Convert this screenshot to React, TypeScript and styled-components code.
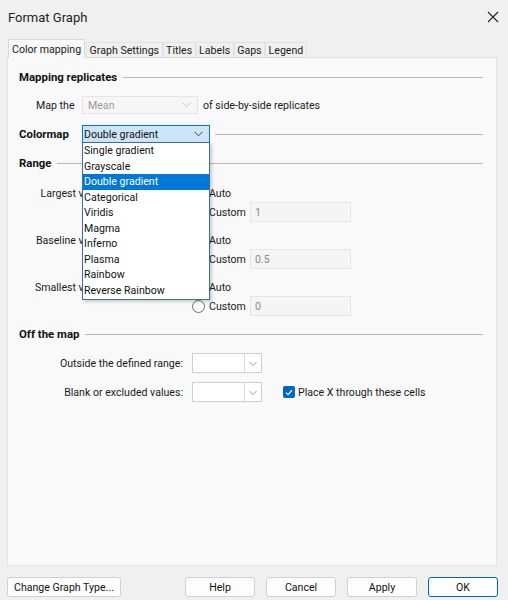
import React from "react";
import styled, { createGlobalStyle } from "styled-components";

const colormaps = [
  "Single gradient",
  "Grayscale",
  "Double gradient",
  "Categorical",
  "Viridis",
  "Magma",
  "Inferno",
  "Plasma",
  "Rainbow",
  "Reverse Rainbow",
];

const ranges = [
  { label: "Largest value:", value: "1" },
  { label: "Baseline value:", value: "0.5" },
  { label: "Smallest value:", value: "0" },
];

const tabs = ["Color mapping", "Graph Settings", "Titles", "Labels", "Gaps", "Legend"];

const Chevron = ({ color = "#606060" }: { color?: string }) => (
  <svg width="9" height="6" viewBox="0 0 9 6">
    <path d="M0.5 0.8 L4.5 4.8 L8.5 0.8" fill="none" stroke={color} strokeWidth="1" />
  </svg>
);

export default function App() {
  return (
    <>
      <GlobalStyle />
      <Window>
        <TitleBar>
          <span>Format Graph</span>
          <svg width="12" height="12" viewBox="0 0 12 12">
            <path d="M1 1 L11 11 M11 1 L1 11" stroke="#222" strokeWidth="1.1" />
          </svg>
        </TitleBar>

        <TabStrip>
          {tabs.map((t, i) => (
            <Tab key={t} $active={i === 0}>
              {t}
            </Tab>
          ))}
        </TabStrip>

        <Panel>
          <SectionHeading>Mapping replicates</SectionHeading>
          <FieldRow>
            <FieldLabel>Map the</FieldLabel>
            <Select $width={116} $disabled>
              <span>Mean</span>
              <Chevron color="#c4c4c4" />
            </Select>
            <span>of side-by-side replicates</span>
          </FieldRow>

          <ColormapRow>
            <HeadingText>Colormap</HeadingText>
            <Select $width={128} $focused>
              <span>Double gradient</span>
              <Chevron color="#404040" />
              <DropList>
                {colormaps.map((c) => (
                  <DropItem key={c} $selected={c === "Double gradient"}>
                    {c}
                  </DropItem>
                ))}
              </DropList>
            </Select>
            <Rule />
          </ColormapRow>

          <SectionHeading>Range</SectionHeading>
          {ranges.map((r) => (
            <RangeGroup key={r.label}>
              <RangeLabel>{r.label}</RangeLabel>
              <Choice>
                <Radio $checked />
                Auto
              </Choice>
              <Choice>
                <Radio />
                Custom
              </Choice>
              <ValueInput>{r.value}</ValueInput>
            </RangeGroup>
          ))}

          <SectionHeading $spaceAbove={2}>Off the map</SectionHeading>
          <OffGrid>
            <OffLabel>Outside the defined range:</OffLabel>
            <SplitSelect>
              <span />
              <Chevron color="#909090" />
            </SplitSelect>
            <span />
            <OffLabel>Blank or excluded values:</OffLabel>
            <SplitSelect>
              <span />
              <Chevron color="#909090" />
            </SplitSelect>
            <CheckRow>
              <Checkbox>
                <svg width="8" height="7" viewBox="0 0 8 7">
                  <path d="M1 3.6 L3 5.6 L7 1.2" fill="none" stroke="#fff" strokeWidth="1.1" />
                </svg>
              </Checkbox>
              Place X through these cells
            </CheckRow>
          </OffGrid>
        </Panel>

        <Footer>
          <Button $width={114}>Change Graph Type...</Button>
          <ButtonGroup>
            <Button>Help</Button>
            <Button>Cancel</Button>
            <Button>Apply</Button>
            <Button $primary>OK</Button>
          </ButtonGroup>
        </Footer>
      </Window>
    </>
  );
}

const GlobalStyle = createGlobalStyle`
  body {
    margin: 0;
    font-family: Roboto, "Noto Sans", sans-serif;
    font-size: 10.6px;
    color: #1a1a1a;
  }
`;

const Window = styled.div`
  width: 508px;
  height: 600px;
  background: #f0f0f0;
  display: flex;
  flex-direction: column;
  box-sizing: border-box;
  white-space: nowrap;
`;

const TitleBar = styled.div`
  height: 34px;
  display: flex;
  align-items: center;
  justify-content: space-between;
  padding: 0 9px 0 8px;
  font-size: 13px;
  color: #222;
`;

const TabStrip = styled.div`
  display: flex;
  align-items: flex-end;
  height: 24px;
  padding-left: 8px;
  margin-bottom: -1px;
  position: relative;
  z-index: 1;
`;

const Tab = styled.div<{ $active?: boolean }>`
  height: ${(p) => (p.$active ? 19 : 16)}px;
  display: flex;
  align-items: center;
  padding: 0 ${(p) => (p.$active ? 3 : 2.5)}px;
  background: ${(p) => (p.$active ? "#f9f9f9" : "#f0f0f0")};
  border: 1px solid ${(p) => (p.$active ? "#d9d9d9" : "#e2e2e2")};
  border-bottom: ${(p) => (p.$active ? "none" : "1px solid #d9d9d9")};
  margin-right: ${(p) => (p.$active ? 1 : 0)}px;
  box-sizing: border-box;
`;

const Panel = styled.div`
  flex: 1;
  margin: 0 11px 0 7px;
  padding: 10px 13px 0 11px;
  background: #f9f9f9;
  border: 1px solid #e3e3e3;
  display: flex;
  flex-direction: column;
`;

const HeadingText = styled.span`
  font-weight: bold;
  font-size: 11.4px;
  color: #111;
`;

const Rule = styled.div`
  flex: 1;
  height: 1px;
  background: #b9b9b9;
`;

const SectionHeading = styled.div<{ $spaceAbove?: number }>`
  display: flex;
  align-items: center;
  gap: 6px;
  height: 18px;
  font-weight: bold;
  font-size: 11.4px;
  color: #111;
  margin-top: ${(p) => p.$spaceAbove ?? 0}px;
  margin-bottom: 10px;

  &::after {
    content: "";
    flex: 1;
    height: 1px;
    background: #b9b9b9;
  }
`;

const FieldRow = styled.div`
  display: flex;
  align-items: center;
  height: 18px;
  margin-bottom: 11px;

  & > span:last-child {
    margin-left: 5px;
  }
`;

const FieldLabel = styled.span`
  width: 63px;
  padding-left: 17px;
  box-sizing: border-box;
`;

const ColormapRow = styled.div`
  display: flex;
  align-items: center;
  height: 18px;
  margin-bottom: 11px;

  & > ${HeadingText} {
    width: 63px;
  }
  & > ${Rule} {
    margin-left: 5px;
  }
`;

const Select = styled.div<{ $width: number; $disabled?: boolean; $focused?: boolean }>`
  position: relative;
  width: ${(p) => p.$width}px;
  height: 18px;
  box-sizing: border-box;
  display: flex;
  align-items: center;
  justify-content: space-between;
  padding: 0 6px 0 1px;
  background: ${(p) => (p.$focused ? "#cce4f7" : p.$disabled ? "#f6f6f6" : "#fff")};
  border: 1px solid ${(p) => (p.$focused ? "#0078d7" : p.$disabled ? "#e4e4e4" : "#c8c8c8")};
  color: ${(p) => (p.$disabled ? "#9a9a9a" : "#111")};
  padding-left: ${(p) => (p.$disabled ? 5 : 1)}px;
`;

const DropList = styled.div`
  position: absolute;
  top: 100%;
  left: -1px;
  right: -1px;
  background: #fff;
  border: 1px solid #3d6ea3;
  box-shadow: 2px 2px 3px rgba(0, 0, 0, 0.18);
  z-index: 5;
  padding-bottom: 1px;
`;

const DropItem = styled.div<{ $selected?: boolean }>`
  height: 15.5px;
  line-height: 15.5px;
  padding-left: 1px;
  background: ${(p) => (p.$selected ? "#0078d7" : "transparent")};
  color: ${(p) => (p.$selected ? "#fff" : "#111")};
`;

const RangeGroup = styled.div`
  display: grid;
  grid-template-columns: 173px 58px 101px;
  grid-template-rows: 18px 20px;
  align-items: center;
  margin-top: 2px;
  margin-bottom: 7px;
`;

const RangeLabel = styled.span`
  grid-row: 1;
  text-align: right;
  padding-right: 86px;
`;

const Choice = styled.label`
  grid-column: 2;
  display: flex;
  align-items: center;
  gap: 4px;
`;

const Radio = styled.span<{ $checked?: boolean }>`
  width: 13px;
  height: 13px;
  border-radius: 50%;
  box-sizing: border-box;
  border: 1px solid ${(p) => (p.$checked ? "#0067c0" : "#6e6e6e")};
  background: ${(p) => (p.$checked ? "radial-gradient(circle, #fff 0 2.5px, #0067c0 3px)" : "#fbfbfb")};
`;

const ValueInput = styled.div`
  grid-column: 3;
  grid-row: 2;
  height: 20px;
  box-sizing: border-box;
  border: 1px solid #e6e6e6;
  background: #f5f5f5;
  color: #8a8a8a;
  padding-left: 4px;
  display: flex;
  align-items: center;
`;

const OffGrid = styled.div`
  display: grid;
  grid-template-columns: 164px 70px auto;
  grid-auto-rows: 20px;
  column-gap: 9px;
  row-gap: 9px;
  align-items: center;
`;

const OffLabel = styled.span`
  text-align: right;
`;

const SplitSelect = styled.div`
  height: 20px;
  box-sizing: border-box;
  border: 1px solid #cfcfcf;
  background: #fff;
  display: grid;
  grid-template-columns: 1fr 17px;
  align-items: center;
  justify-items: center;

  & > svg {
    height: 20px;
    border-left: 1px solid #dcdcdc;
    width: 17px;
    padding: 0 4px;
    box-sizing: border-box;
  }
`;

const CheckRow = styled.label`
  display: flex;
  align-items: center;
  gap: 3px;
  padding-left: 12px;
`;

const Checkbox = styled.span`
  width: 12px;
  height: 12px;
  border-radius: 2px;
  background: #0067c0;
  display: flex;
  align-items: center;
  justify-content: center;
`;

const Footer = styled.div`
  height: 34px;
  display: flex;
  align-items: flex-start;
  justify-content: space-between;
  padding: 11px 10px 0 7px;
  box-sizing: border-box;
`;

const ButtonGroup = styled.div`
  display: flex;
  gap: 11px;
`;

const Button = styled.button<{ $width?: number; $primary?: boolean }>`
  width: ${(p) => p.$width ?? 70}px;
  height: 20px;
  padding: 0;
  font: inherit;
  color: #111;
  background: #fdfdfd;
  border: 1px solid ${(p) => (p.$primary ? "#0067c0" : "#d0d0d0")};
  border-radius: 3px;
`;
